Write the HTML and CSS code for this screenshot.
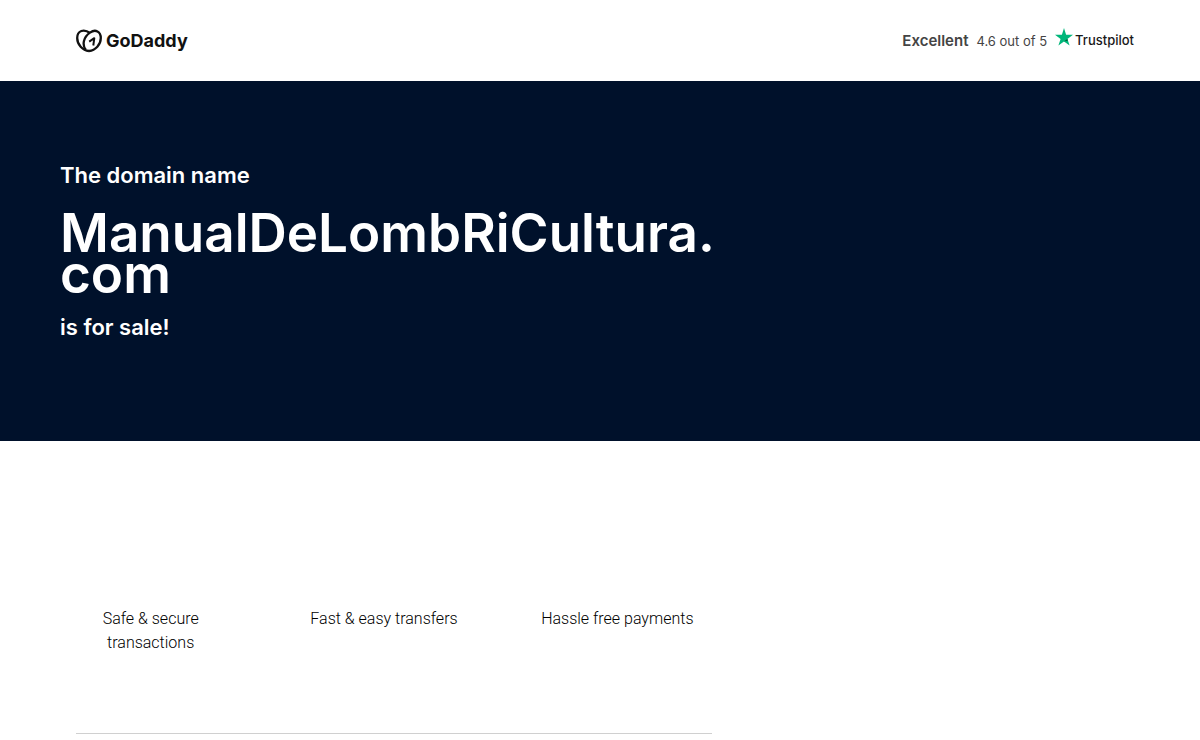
FILE: index.html
```html
<!DOCTYPE html>
<html lang="en">
<head>
    <meta charset="UTF-8">
    <meta name="viewport" content="width=device-width, initial-scale=1.0">
    <title>ManualDeLombRiCultura.com is for sale</title>
    <link rel="stylesheet" href="styles.css">
</head>
<body>
    <header class="header">
        <div class="brand">
            <svg class="brand-icon" viewBox="0 0 26 24" fill="none" stroke="#111" stroke-width="2.3" stroke-linejoin="round" aria-hidden="true">
                <path d="M13 22C6.500 21.500 1.200 15.500 1.200 9C1.200 1.500 8 -0.500 14 4"/>
                <path d="M9.800 20.800C5.800 16 7.500 8 14 3.600C19.500 -0.300 24.800 2.500 24.800 9C24.800 15.500 19.500 21.500 13 22"/>
                <path d="M13.200 12.600L18.300 9.200L17.300 16.500" stroke-width="2"/>
            </svg>
            <span class="brand-name">GoDaddy</span>
        </div>
        <div class="rating">
            <strong class="rating-label">Excellent</strong>
            <span class="rating-score">4.6 out of 5</span>
            <span class="trustpilot">
                <svg class="trustpilot-star" viewBox="0 0 18 18" aria-hidden="true">
                    <path fill="#00b67a" d="M9 0L11.100 6.700H18L12.400 10.900L14.600 17.500L9 13.400L3.400 17.500L5.600 10.900L0 6.700H6.900Z"/>
                    <path fill="#005128" d="M12.900 12.400L12.400 10.900L9 13.400Z"/>
                </svg>
                <span class="trustpilot-name">Trustpilot</span>
            </span>
        </div>
    </header>

    <main>
        <section class="hero">
            <p class="hero-text">The domain name</p>
            <h1 class="domain">ManualDeLombRiCultura.<wbr>com</h1>
            <p class="hero-text">is for sale!</p>
        </section>

        <ul class="features">
            <li class="feature">Safe &amp; secure transactions</li>
            <li class="feature">Fast &amp; easy transfers</li>
            <li class="feature">Hassle free payments</li>
        </ul>
        <hr class="divider">
    </main>
</body>
</html>
```

FILE: styles.css
```css
* {
    box-sizing: border-box;
}
body {
    margin: 0;
    background: #fff;
    color: #111;
    font-family: Inter, "Liberation Sans", sans-serif;
}
.header {
    display: flex;
    justify-content: space-between;
    align-items: center;
    height: 81px;
    padding: 0 66px 0 76px;
}
.brand {
    display: flex;
    align-items: center;
    gap: 4px;
}
.brand-icon {
    width: 26px;
    height: 24px;
}
.brand-name {
    font-size: 18px;
    font-weight: 700;
    line-height: 24px;
}
.rating {
    display: flex;
    align-items: center;
    gap: 8px;
    color: #444;
}
.rating-label {
    font-size: 15px;
    font-weight: 600;
    line-height: 24px;
}
.rating-score {
    font-size: 13px;
    line-height: 24px;
}
.trustpilot {
    display: flex;
    align-items: flex-start;
    gap: 2px;
    padding-bottom: 2px;
    color: #191919;
}
.trustpilot-star {
    width: 18px;
    height: 18px;
}
.trustpilot-name {
    font-size: 13px;
    font-weight: 500;
    line-height: 24px;
}
.hero {
    padding: 80px 60px 100px;
    background: #00112b;
    color: #fff;
}
.hero-text {
    margin: 0;
    font-size: 22px;
    font-weight: 600;
    line-height: 28px;
}
.domain {
    max-width: 660px;
    margin: 24px 0 18px;
    font-size: 53px;
    font-weight: 600;
    line-height: 41px;
}
.features {
    display: grid;
    grid-template-columns: repeat(3, 1fr);
    width: 700px;
    max-width: 100%;
    margin: 0 0 0 34px;
    padding: 166px 0 78px;
    list-style: none;
}
.feature {
    padding: 0 40px;
    color: #000;
    font-family: Roboto, sans-serif;
    font-size: 16px;
    font-weight: 300;
    line-height: 24px;
    text-align: center;
}
.divider {
    width: 53%;
    margin: 0 0 0 76px;
    border: 0;
    border-top: 1px solid #d0d0d0;
}
```
